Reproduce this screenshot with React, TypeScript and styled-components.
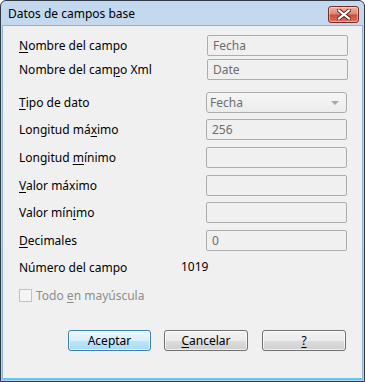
import styled, { createGlobalStyle } from "styled-components";

const GlobalStyle = createGlobalStyle`
  html, body {
    margin: 0;
    padding: 0;
    background: #ffffff;
  }
  * {
    box-sizing: border-box;
  }
`;

const Window = styled.div`
  width: 365px;
  height: 382px;
  display: flex;
  flex-direction: column;
  border: 1px solid #2e3a46;
  border-radius: 6px 6px 0 0;
  background: linear-gradient(180deg, #c4d9ee 0%, #b9d1ea 100%);
  font-family: "Noto Sans", "Open Sans", sans-serif;
  font-size: 12px;
  color: #000;
  overflow: hidden;
`;

const TitleBar = styled.div`
  height: 24px;
  flex: none;
  display: flex;
  align-items: center;
  justify-content: space-between;
  padding: 0 5px 0 7px;
`;

const Title = styled.span`
  font-size: 12px;
  color: #000;
`;

const CloseBtn = styled.div`
  width: 31px;
  height: 17px;
  margin-top: 2px;
  display: flex;
  align-items: center;
  justify-content: center;
  border: 1px solid #7a2a20;
  border-radius: 3px;
  background: linear-gradient(180deg, #ebb3a8 0%, #dc8878 45%, #c8503b 55%, #d9735f 100%);
  box-shadow: inset 0 0 0 1px rgba(255, 255, 255, 0.4);
`;

/* área cliente del diálogo */
const Client = styled.div`
  flex: 1;
  margin: 0 1px 1px 1px;
  background: #f0f0f0;
  border: 1px solid #8fb3d5;
  border-bottom: 2px solid #5fc9ee;
  padding: 9px 0 0 15px;
  display: flex;
  flex-direction: column;
`;

const Row = styled.div<{ $top: number }>`
  display: flex;
  align-items: center;
  margin-top: ${(p) => p.$top}px;
  height: 21px;
`;

const Label = styled.span<{ $w?: number }>`
  width: ${(p) => p.$w ?? 188}px;
  flex: none;
  white-space: nowrap;
  padding-left: 1px;
`;

const U = styled.span`
  text-decoration: underline;
  text-underline-offset: 2px;
`;

const Field = styled.div<{ $shift?: number }>`
  width: 141px;
  height: 21px;
  margin-left: ${(p) => p.$shift ?? 0}px;
  border: 1px solid #adadad;
  border-radius: 2px;
  background: #f0f0f0;
  color: #6d6d6d;
  display: flex;
  align-items: center;
  padding-left: 5px;
`;

const Select = styled.div`
  width: 141px;
  height: 21px;
  border: 1px solid #acacac;
  border-radius: 3px;
  background: linear-gradient(180deg, #f5f5f5 0%, #ececec 100%);
  color: #6d6d6d;
  display: flex;
  align-items: center;
  justify-content: space-between;
  padding: 0 7px 0 3px;
`;

const Arrow = styled.span`
  width: 0;
  height: 0;
  border-left: 4px solid transparent;
  border-right: 4px solid transparent;
  border-top: 4px solid #a8a8a8;
`;

const Value = styled.span`
  color: #000;
  margin-top: -3px;
`;

const CheckRow = styled.label`
  display: flex;
  align-items: center;
  gap: 4px;
  margin-top: 11px;
  height: 13px;
  color: #8d8d8d;
  padding-left: 1px;
`;

const Box = styled.span`
  width: 13px;
  height: 13px;
  border: 1px solid #c2c2c2;
  background: #f4f4f4;
  flex: none;
`;

const Buttons = styled.div`
  display: flex;
  gap: 13px;
  margin-top: 28px;
  padding-left: 50px;
`;

const Button = styled.button<{ $default?: boolean }>`
  width: ${(p) => (p.$default ? 83 : 84)}px;
  height: 21px;
  padding: 0;
  font-family: inherit;
  font-size: 12px;
  color: #000;
  border-radius: 3px;
  border: 1px solid ${(p) => (p.$default ? "#3c7fb1" : "#707070")};
  background: ${(p) =>
    p.$default
      ? "linear-gradient(180deg, #eaf6fd 0%, #d9f0fc 50%, #bee6fd 51%, #a7d9f5 100%)"
      : "linear-gradient(180deg, #f2f2f2 0%, #ebebeb 50%, #dddddd 51%, #cfcfcf 100%)"};
  box-shadow: inset 0 0 0 1px rgba(255, 255, 255, 0.7);
`;

const LastButton = styled(Button)`
  margin-left: 1px;
`;

function App() {
  return (
    <>
      <GlobalStyle />
      <Window>
        <TitleBar>
          <Title>Datos de campos base</Title>
          <CloseBtn>
            <svg width="14" height="11" viewBox="0 0 14 11">
              <path
                d="M2 1.5 L12 9.5 M12 1.5 L2 9.5"
                stroke="#5a1f18"
                strokeWidth="4"
                strokeLinecap="square"
              />
              <path
                d="M2 1.5 L12 9.5 M12 1.5 L2 9.5"
                stroke="#ffffff"
                strokeWidth="2.2"
                strokeLinecap="square"
              />
            </svg>
          </CloseBtn>
        </TitleBar>
        <Client>
          <Row $top={0}>
            <Label>
              <U>N</U>ombre del campo
            </Label>
            <Field $shift={1}>Fecha</Field>
          </Row>
          <Row $top={3}>
            <Label>
              Nombre del cam<U>p</U>o Xml
            </Label>
            <Field $shift={1}>Date</Field>
          </Row>
          <Row $top={12}>
            <Label>
              <U>T</U>ipo de dato
            </Label>
            <Select>
              Fecha
              <Arrow />
            </Select>
          </Row>
          <Row $top={6}>
            <Label>
              Longitud má<U>x</U>imo
            </Label>
            <Field>256</Field>
          </Row>
          <Row $top={7}>
            <Label>
              Longitud <U>m</U>ínimo
            </Label>
            <Field />
          </Row>
          <Row $top={7}>
            <Label>
              <U>V</U>alor máximo
            </Label>
            <Field />
          </Row>
          <Row $top={6}>
            <Label>
              Valor mín<U>i</U>mo
            </Label>
            <Field />
          </Row>
          <Row $top={7}>
            <Label>
              <U>D</U>ecimales
            </Label>
            <Field>0</Field>
          </Row>
          <Row $top={6}>
            <Label $w={163}>Número del campo</Label>
            <Value>1019</Value>
          </Row>
          <CheckRow>
            <Box />
            <span>
              Todo <U>e</U>n mayúscula
            </span>
          </CheckRow>
          <Buttons>
            <Button $default>Aceptar</Button>
            <Button>
              <U>C</U>ancelar
            </Button>
            <LastButton>
              <U>?</U>
            </LastButton>
          </Buttons>
        </Client>
      </Window>
    </>
  );
}

export default App;
